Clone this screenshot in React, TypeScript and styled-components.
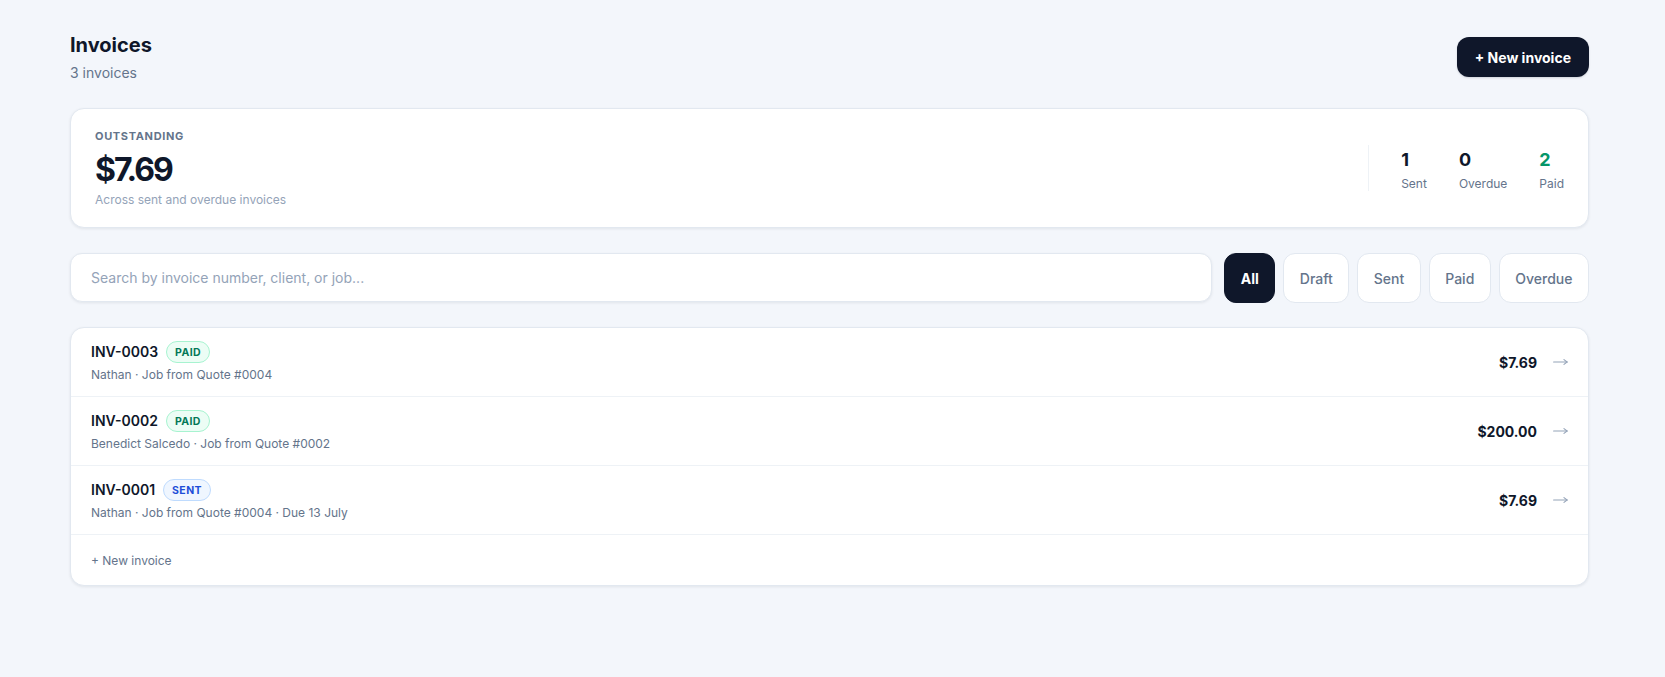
import React from "react";
import styled, { createGlobalStyle } from "styled-components";

const Global = createGlobalStyle`
  * { box-sizing: border-box; }
  html, body { margin: 0; padding: 0; background: #f3f6fb; }
  body { font-family: Inter, "Noto Sans", "Liberation Sans", sans-serif; color: #0f172a; }
  input { font-family: inherit; }
`;

const Page = styled.div`
  padding: 31px 76px 40px 70px;
  display: flex;
  flex-direction: column;
`;

const Header = styled.div`
  display: flex;
  align-items: center;
  justify-content: space-between;
  margin-bottom: 25px;
`;

const TitleBlock = styled.div`
  display: flex;
  flex-direction: column;
  gap: 4px;
`;

const Title = styled.h1`
  margin: 0;
  font-size: 20px;
  line-height: 28px;
  font-weight: 700;
  color: #0f172a;
`;

const Subtitle = styled.div`
  font-size: 14px;
  line-height: 20px;
  color: #64748b;
`;

const PrimaryButton = styled.button`
  height: 40px;
  padding: 0 18px;
  border: none;
  border-radius: 12px;
  background: #0f172a;
  color: #fff;
  font-family: inherit;
  font-size: 14px;
  font-weight: 700;
  box-shadow: 0 1px 2px rgba(15, 23, 42, 0.15);
`;

const Card = styled.div`
  background: #fff;
  border: 1px solid #e2e8f0;
  border-radius: 14px;
  box-shadow: 0 1px 3px rgba(15, 23, 42, 0.08);
`;

const SummaryCard = styled(Card)`
  display: flex;
  align-items: center;
  justify-content: space-between;
  padding: 19px 24px 19px;
`;

const SummaryMain = styled.div`
  display: flex;
  flex-direction: column;
`;

const Eyebrow = styled.div`
  font-size: 11px;
  line-height: 16px;
  font-weight: 700;
  letter-spacing: 0.06em;
  color: #64748b;
  margin-bottom: 6px;
`;

const BigAmount = styled.div`
  font-size: 32px;
  line-height: 40px;
  font-weight: 700;
  letter-spacing: -2px;
  color: #0f172a;
  margin-bottom: 2px;
`;

const Caption = styled.div`
  font-size: 12px;
  line-height: 16px;
  color: #94a3b8;
`;

const Stats = styled.div`
  display: flex;
  gap: 32px;
  padding: 5px 0 0 32px;
  border-left: 1px solid #eef2f6;
  height: 46px;
  align-items: center;
`;

const Stat = styled.div`
  display: flex;
  flex-direction: column;
  gap: 6px;
`;

const StatValue = styled.div<{ $color?: string }>`
  font-size: 18px;
  line-height: 20px;
  font-weight: 700;
  color: ${(p) => p.$color || "#0f172a"};
`;

const StatLabel = styled.div`
  font-size: 12px;
  line-height: 16px;
  color: #64748b;
`;

const Toolbar = styled.div`
  display: flex;
  align-items: flex-start;
  gap: 12px;
  margin: 25px 0 24px;
`;

const SearchBox = styled.input`
  flex: 1;
  height: 49px;
  border: 1px solid #e2e8f0;
  border-radius: 12px;
  background: #fff;
  padding: 0 20px;
  font-size: 14px;
  color: #0f172a;
  outline: none;
  box-shadow: 0 1px 3px rgba(15, 23, 42, 0.08);
  &::placeholder { color: #94a3b8; }
`;

const Filters = styled.div`
  display: flex;
  gap: 8px;
`;

const FilterButton = styled.button<{ $active?: boolean }>`
  height: 50px;
  padding: 0 15.5px;
  border-radius: 12px;
  border: 1px solid ${(p) => (p.$active ? "#0f172a" : "#e2e8f0")};
  background: ${(p) => (p.$active ? "#0f172a" : "#fff")};
  color: ${(p) => (p.$active ? "#fff" : "#64748b")};
  font-family: inherit;
  font-size: 14px;
  font-weight: ${(p) => (p.$active ? 700 : 500)};
`;

const ListCard = styled(Card)`
  display: flex;
  flex-direction: column;
  overflow: hidden;
`;

const Row = styled.div`
  display: flex;
  align-items: center;
  justify-content: space-between;
  height: 69px;
  padding: 0 20px;
  border-bottom: 1px solid #eef2f6;
`;

const RowInfo = styled.div`
  display: flex;
  flex-direction: column;
  gap: 4px;
`;

const RowTitleLine = styled.div`
  display: flex;
  align-items: center;
  gap: 8px;
`;

const InvoiceNo = styled.span`
  font-size: 14px;
  line-height: 22px;
  font-weight: 600;
  color: #0f172a;
`;

const Badge = styled.span<{ $tone: "paid" | "sent" }>`
  display: inline-flex;
  align-items: center;
  height: 22px;
  padding: 0 8px;
  border-radius: 999px;
  font-size: 10.5px;
  font-weight: 700;
  letter-spacing: 0.04em;
  border: 1px solid ${(p) => (p.$tone === "paid" ? "#a7f3d0" : "#bfdbfe")};
  background: ${(p) => (p.$tone === "paid" ? "#ecfdf5" : "#eff6ff")};
  color: ${(p) => (p.$tone === "paid" ? "#047857" : "#1d4ed8")};
`;

const RowMeta = styled.div`
  font-size: 12px;
  line-height: 16px;
  color: #64748b;
`;

const RowRight = styled.div`
  display: flex;
  align-items: center;
  gap: 16px;
`;

const Amount = styled.span`
  font-size: 14px;
  font-weight: 700;
  color: #0f172a;
`;

const ArrowIcon = styled.svg`
  display: block;
  width: 15px;
  height: 8px;
`;

const Footer = styled.div`
  height: 50px;
  display: flex;
  align-items: center;
  padding: 0 20px;
  font-size: 12px;
  color: #64748b;
`;

const Arrow = () => (
  <ArrowIcon viewBox="0 0 15 8" fill="none" stroke="#94a3b8" strokeWidth="1.1" strokeLinecap="round">
    <path d="M0.6 4H14.2" />
    <path d="M11 1.6L14.2 4L11 6.4" />
  </ArrowIcon>
);

const rows = [
  { no: "INV-0003", status: "paid" as const, meta: "Nathan · Job from Quote #0004", amount: "$7.69" },
  { no: "INV-0002", status: "paid" as const, meta: "Benedict Salcedo · Job from Quote #0002", amount: "$200.00" },
  { no: "INV-0001", status: "sent" as const, meta: "Nathan · Job from Quote #0004 · Due 13 July", amount: "$7.69" },
];

export default function App() {
  return (
    <>
      <Global />
      <Page>
        <Header>
          <TitleBlock>
            <Title>Invoices</Title>
            <Subtitle>3 invoices</Subtitle>
          </TitleBlock>
          <PrimaryButton>+ New invoice</PrimaryButton>
        </Header>

        <SummaryCard>
          <SummaryMain>
            <Eyebrow>OUTSTANDING</Eyebrow>
            <BigAmount>$7.69</BigAmount>
            <Caption>Across sent and overdue invoices</Caption>
          </SummaryMain>
          <Stats>
            <Stat>
              <StatValue>1</StatValue>
              <StatLabel>Sent</StatLabel>
            </Stat>
            <Stat>
              <StatValue>0</StatValue>
              <StatLabel>Overdue</StatLabel>
            </Stat>
            <Stat>
              <StatValue $color="#059669">2</StatValue>
              <StatLabel>Paid</StatLabel>
            </Stat>
          </Stats>
        </SummaryCard>

        <Toolbar>
          <SearchBox placeholder="Search by invoice number, client, or job..." />
          <Filters>
            <FilterButton $active>All</FilterButton>
            <FilterButton>Draft</FilterButton>
            <FilterButton>Sent</FilterButton>
            <FilterButton>Paid</FilterButton>
            <FilterButton>Overdue</FilterButton>
          </Filters>
        </Toolbar>

        <ListCard>
          {rows.map((r) => (
            <Row key={r.no}>
              <RowInfo>
                <RowTitleLine>
                  <InvoiceNo>{r.no}</InvoiceNo>
                  <Badge $tone={r.status}>{r.status.toUpperCase()}</Badge>
                </RowTitleLine>
                <RowMeta>{r.meta}</RowMeta>
              </RowInfo>
              <RowRight>
                <Amount>{r.amount}</Amount>
                <Arrow />
              </RowRight>
            </Row>
          ))}
          <Footer>+ New invoice</Footer>
        </ListCard>
      </Page>
    </>
  );
}
